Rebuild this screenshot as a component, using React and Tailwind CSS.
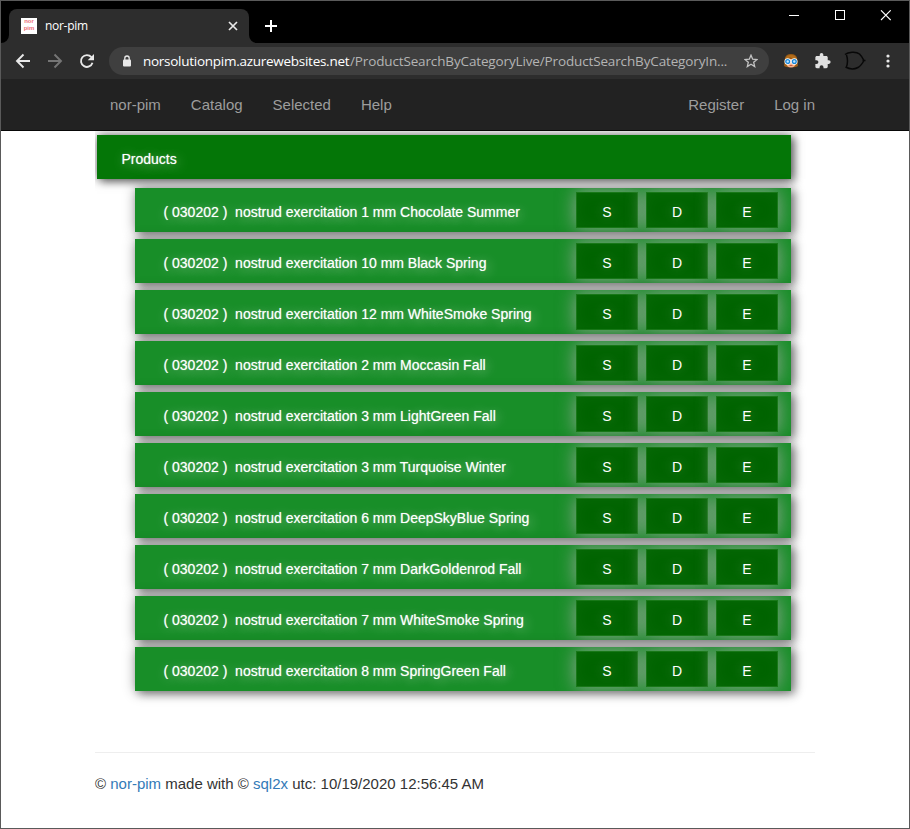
import React from "react";

const products = [
  "1 mm Chocolate Summer",
  "10 mm Black Spring",
  "12 mm WhiteSmoke Spring",
  "2 mm Moccasin Fall",
  "3 mm LightGreen Fall",
  "3 mm Turquoise Winter",
  "6 mm DeepSkyBlue Spring",
  "7 mm DarkGoldenrod Fall",
  "7 mm WhiteSmoke Spring",
  "8 mm SpringGreen Fall",
];

function TitleBar() {
  return (
    <div className="flex h-[42px] items-start bg-black pl-2">
      <div className="relative mt-2 flex h-[34px] w-[240px] items-center rounded-t-lg bg-[#2d2d2d] pr-[11px] pl-3">
        <svg className="absolute bottom-0 -left-2" width="8" height="8"><path d="M8 0V8H0A8 8 0 0 0 8 0Z" fill="#2d2d2d" /></svg>
        <svg className="absolute -right-2 bottom-0" width="8" height="8"><path d="M0 0V8H8A8 8 0 0 1 0 0Z" fill="#2d2d2d" /></svg>
        <div className="flex h-4 w-4 flex-col items-center bg-white font-['Liberation_Sans',sans-serif] text-[6px] leading-[7px] font-bold text-[#ee7079]">
          <span>nor</span>
          <span>pim</span>
        </div>
        <span className="ml-2 flex-1 font-['Open_Sans',sans-serif] text-[12px] leading-4 tracking-[-0.3px] text-white">nor-pim</span>
        <svg width="10" height="10" viewBox="0 0 10 10" stroke="#e8e8e8" strokeWidth="1.7"><path d="M1 1L9 9M9 1L1 9" /></svg>
      </div>
      <svg className="mt-[18px] ml-[15px]" width="14" height="14" viewBox="0 0 14 14" stroke="#fff" strokeWidth="2"><path d="M7 1V13M1 7H13" /></svg>
      <div className="flex-1" />
      <svg className="mt-[9px] mr-[18px]" width="102" height="11" viewBox="0 0 102 11" fill="none" stroke="#fff">
        <path d="M0 5.5H10" />
        <rect x="46.5" y="0.5" width="9" height="9" />
        <path d="M92 .3L101.700 10M101.700 .3L92 10" strokeWidth="1.1" />
      </svg>
    </div>
  );
}

function Toolbar() {
  return (
    <div className="flex h-9 items-center bg-[#2d2d2d] pl-[10px]">
      <svg width="24" height="24" viewBox="-12 -12 24 24" fill="none" stroke="#e8e8e8" strokeWidth="1.9"><path d="M7 0H-6M.5-6.500L-6 0L.5 6.500" /></svg>
      <svg className="ml-2" width="24" height="24" viewBox="-12 -12 24 24" fill="none" stroke="#757575" strokeWidth="1.9"><path d="M-7 0H6M-.5-6.500L6 0L-.5 6.500" /></svg>
      <svg className="ml-2" width="24" height="24" viewBox="-12 -12 24 24">
        <path d="M5.500 1.800A5.900 5.900 0 1 1 4.400-3.800" fill="none" stroke="#e8e8e8" strokeWidth="1.900" />
        <path d="M7-7V-.7H.7Z" fill="#e8e8e8" />
      </svg>
      <div className="ml-[10px] flex h-7 w-[660px] items-center rounded-full bg-[#3f3f3f] pr-[11px] pl-[13px]">
        <svg width="10" height="13" viewBox="0 0 10 13"><rect x="1" y="4.500" width="8" height="7" rx="1" fill="#e8e8e8" /><path d="M2.800 5V3.200a2.200 2.200 0 0 1 4.400 0V5" fill="none" stroke="#e8e8e8" strokeWidth="1.300" /></svg>
        <span className="ml-[11px] flex-1 font-['Open_Sans',sans-serif] text-[13.5px] leading-5 whitespace-nowrap text-[#b4b4b4]">
          <span className="inline-block w-[207px] tracking-[-0.270px] text-white">norsolutionpim.azurewebsites.net</span>
          <span className="tracking-[-0.140px]">/ProductSearchByCategoryLive/ProductSearchByCategoryIn...</span>
        </span>
        <svg width="14" height="14" viewBox="0 0 14 14" fill="none" stroke="#c4c4c4" strokeWidth="1.300"><path d="M7 1.200L8.700 5.200L13 5.500L9.700 8.300L10.700 12.600L7 10.300L3.300 12.600L4.300 8.300L1 5.500L5.300 5.200Z" /></svg>
      </div>
      <svg className="ml-[14px]" width="16" height="16" viewBox="0 0 16 16">
        <path d="M1 13L2 5Q3 1 8 1Q13 1 14 5L15 13Q12 15 8 14Q4 15 1 13Z" fill="#9a5b14" />
        <path d="M3 6H13V10Q12 14.500 8 14.500Q4 14.500 3 10Z" fill="#f3b28c" />
        <path d="M2 6Q4 2 8 2Q12 2 14 6Q9 6 7 4Q5 6 2 6Z" fill="#b36d1c" />
        <circle cx="4.700" cy="8.500" r="3.200" fill="#fff" />
        <circle cx="11.300" cy="8.500" r="3.200" fill="#fff" />
        <circle cx="4.700" cy="8.500" r="1.900" fill="#bfe4ff" stroke="#1685d8" strokeWidth="1.300" />
        <circle cx="11.300" cy="8.500" r="1.900" fill="#bfe4ff" stroke="#1685d8" strokeWidth="1.300" />
        <path d="M6.500 12.500H9.500" stroke="#c65b45" />
      </svg>
      <svg className="ml-4" width="16" height="16" viewBox="2 1 21 22" fill="#e0e0e0"><path d="M20.500 11H19V7c0-1.100-.9-2-2-2h-4V3.500a2.500 2.500 0 0 0-5 0V5H4c-1.100 0-2 .9-2 2v3.800h1.500a2.700 2.700 0 0 1 0 5.400H2V20c0 1.100.9 2 2 2h3.800v-1.500a2.700 2.700 0 0 1 5.400 0V22H17c1.100 0 2-.9 2-2v-4h1.500a2.500 2.500 0 0 0 0-5z" /></svg>
      <svg className="ml-[13px]" width="22" height="20" viewBox="0 0 22 20" fill="none" stroke="#080808" strokeWidth="1.500"><path d="M1 3.500C4 1 12 0 15.500 3Q18 5.500 20 9.500Q17 15 14 16.500C10 18.500 5 18 1.500 16M2.500 4Q4.500 10 2.500 16M18.500 9.500H21.500" /></svg>
      <svg className="ml-[20px]" width="4" height="14" viewBox="0 0 4 14" fill="#e8e8e8"><circle cx="2" cy="2" r="1.600" /><circle cx="2" cy="7" r="1.600" /><circle cx="2" cy="12" r="1.600" /></svg>
    </div>
  );
}

function ActionButton({ label }) {
  return (
    <button className="h-9 w-[62px] border border-[#187818] bg-[#006400] pt-[5px] text-[14px] text-white shadow-[0_0_18px_1px_rgba(170,170,170,0.75),inset_0_0_14px_rgba(40,130,40,0.200)] [text-shadow:0_0_12px_rgba(255,255,255,0.3)]">
      {label}
    </button>
  );
}

function ProductRow({ name }) {
  return (
    <div className="flex h-11 items-center overflow-hidden bg-[#188e28] pr-[13px] pl-[28.5px]">
      <span className="flex-1 pt-[5px] text-[14px] whitespace-pre text-white [text-shadow:0_0_1px_rgba(255,255,255,0.6),2px_2px_12px_rgba(255,255,255,0.5)]">{"( 030202 )  nostrud exercitation " + name}</span>
      <div className="flex gap-2">
        <ActionButton label="S" />
        <ActionButton label="D" />
        <ActionButton label="E" />
      </div>
    </div>
  );
}

export default function App() {
  return (
    <div className="flex h-[829px] w-[910px] flex-col overflow-hidden border border-[#5a5a5a] bg-white font-['Liberation_Sans',Arial,sans-serif]">
      <TitleBar />
      <Toolbar />
      <nav className="h-[52px] shrink-0 border-b border-[#080808] bg-[#222] px-[94px] text-[15px] text-[#9d9d9d]">
        <div className="flex h-[52px] items-center pl-[15px]">
          <a className="mr-[30px]">nor-pim</a>
          <a className="mr-[30px]">Catalog</a>
          <a className="mr-[30px]">Selected</a>
          <a className="flex-1">Help</a>
          <a className="mr-[30px]">Register</a>
          <a>Log in</a>
        </div>
      </nav>
      <main className="ml-[94px] h-[621px] w-[720px] overflow-hidden pt-1 pl-[2px]">
        <div className="flex h-11 w-[694px] items-center bg-[#047607] pt-[5px] pl-[24.5px] text-[14px] text-white shadow-[4px_3px_8px_rgba(0,0,0,0.4),0_0_10px_rgba(0,0,0,0.5)] [text-shadow:0_0_1px_rgba(255,255,255,0.6),2px_2px_12px_rgba(255,255,255,0.5)]">Products</div>
        <div className="mt-[9px] ml-[38px] flex w-[656px] flex-col gap-[7px]">
          {products.map((name) => (
            <div key={name} className="shadow-[4px_3px_8px_rgba(0,0,0,0.3),1px_1px_12px_rgba(0,0,0,0.45)]">
              <ProductRow name={name} />
            </div>
          ))}
        </div>
      </main>
      <footer className="mx-[94px] flex-1 border-t border-[#eee] pt-[20px] text-[15px] leading-[22px] text-[#333]">
        © <a className="text-[#337ab7]">nor-pim</a> made with © <a className="text-[#337ab7]">sql2x</a> utc: 10/19/2020 12:56:45 AM
      </footer>
    </div>
  );
}
